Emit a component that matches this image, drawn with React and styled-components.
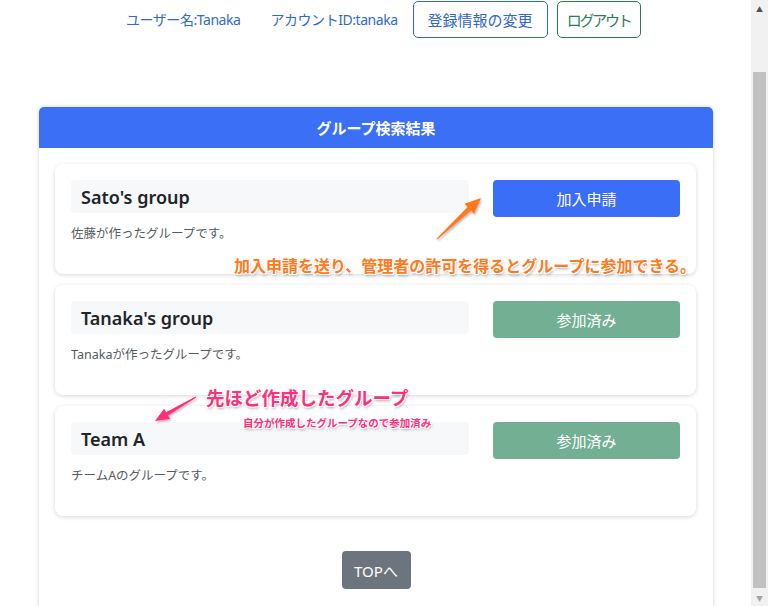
import React from 'react';
import styled, { createGlobalStyle } from 'styled-components';

const GlobalStyle = createGlobalStyle`
  html, body {
    margin: 0;
    padding: 0;
    background: #fff;
    overflow: hidden;
  }
  body {
    font-family: "Noto Sans", "Noto Sans CJK JP", sans-serif;
    color: #212529;
  }
`;

const Shell = styled.div`
  display: flex;
  height: 606px;
  overflow: hidden;
`;

const Main = styled.div`
  position: relative;
  flex: 1;
  min-width: 0;
`;

const TopBar = styled.div`
  display: flex;
  align-items: center;
  height: 36px;
  padding: 1px 0 0 126px;
`;

const UserText = styled.span`
  font-size: 14px;
  color: #3169d3;
  margin-right: ${p => p.gap}px;
  letter-spacing: -0.45px;
`;

const OutlineBtn = styled.button`
  height: 37px;
  padding: 0 ${p => p.pad}px;
  margin-right: ${p => p.gap || 0}px;
  background: #fff;
  border: 1px solid ${p => p.color};
  color: ${p => p.color};
  border-radius: 5px;
  font-family: inherit;
  font-size: 15px;
  letter-spacing: ${p => p.spacing || 0}px;
`;

const ResultCard = styled.div`
  margin: 70px 0 0 39px;
  width: 674px;
  height: 520px;
  border-radius: 5px;
  background: #fff;
  box-shadow: 0 0 4px rgba(0, 0, 0, 0.18);
  overflow: hidden;
`;

const CardHeader = styled.div`
  height: 41px;
  display: flex;
  align-items: center;
  justify-content: center;
  background: #3b6ff6;
  color: #fff;
  font-size: 15px;
  font-weight: 700;
`;

const CardBody = styled.div`
  display: flex;
  flex-direction: column;
  gap: 11px;
  padding: 16px 17px 0 16px;
`;

const GroupItem = styled.div`
  box-sizing: border-box;
  height: 110px;
  display: flex;
  gap: 24px;
  padding: 16px;
  border-radius: 8px;
  background: #fff;
  box-shadow: 0 1px 4px rgba(0, 0, 0, 0.16);
`;

const Info = styled.div`
  flex: 1;
  display: flex;
  flex-direction: column;
`;

const NameBox = styled.div`
  height: 33px;
  display: flex;
  align-items: center;
  padding-left: 10px;
  background: #f7f8fa;
  border-radius: 4px;
  font-size: 18px;
  font-weight: 600;
  color: #212529;
`;

const Desc = styled.div`
  margin-top: 10px;
  font-size: 12.5px;
  color: #555b61;
`;

const ActionBtn = styled.button`
  width: 187px;
  height: 37px;
  border: none;
  border-radius: 4px;
  background: ${p => (p.joined ? '#72af93' : '#3b6ef6')};
  color: #fff;
  font-family: inherit;
  font-size: 15px;
`;

const Footer = styled.div`
  display: flex;
  justify-content: center;
  padding-top: 35px;
`;

const TopBtn = styled.button`
  width: 69px;
  height: 38px;
  border: none;
  border-radius: 4px;
  background: #6c757d;
  color: #fff;
  font-family: inherit;
  font-size: 15px;
`;

const Note = styled.div`
  position: absolute;
  left: ${p => p.x}px;
  top: ${p => p.y}px;
  font-size: ${p => p.size}px;
  font-weight: 700;
  color: ${p => p.color};
  white-space: nowrap;
  text-shadow: -1px -1px 0 #fff, 1px -1px 0 #fff, -1px 1px 0 #fff, 1px 1px 0 #fff,
    1px 2px 3px rgba(0, 0, 0, 0.35);
`;

const Arrows = styled.svg`
  position: absolute;
  left: 0;
  top: 0;
  pointer-events: none;
`;

const Scrollbar = styled.div`
  width: 17px;
  display: flex;
  flex-direction: column;
  background: #f1f1f1;
`;

const ScrollArrow = styled.div`
  height: 17px;
  display: flex;
  align-items: center;
  justify-content: center;
  color: ${p => p.color};
  font-size: 7px;
`;

const Track = styled.div`
  flex: 1;
  display: flex;
  flex-direction: column;
  padding: 55px 2px 1px;
`;

const Thumb = styled.div`
  flex: 1;
  background: #c1c1c1;
`;

const groups = [
  { name: "Sato's group", desc: '佐藤が作ったグループです。', joined: false },
  { name: "Tanaka's group", desc: 'Tanakaが作ったグループです。', joined: true },
  { name: 'Team A', desc: 'チームAのグループです。', joined: true },
];

export default function App() {
  return (
    <Shell>
      <GlobalStyle />
      <Main>
        <TopBar>
          <UserText gap={30}>ユーザー名:Tanaka</UserText>
          <UserText gap={15}>アカウントID:tanaka</UserText>
          <OutlineBtn color="#2f66cf" pad={14} gap={9}>登録情報の変更</OutlineBtn>
          <OutlineBtn color="#2b7a4f" pad={9} spacing={-2.2}>ログアウト</OutlineBtn>
        </TopBar>

        <ResultCard>
          <CardHeader>グループ検索結果</CardHeader>
          <CardBody>
            {groups.map(g => (
              <GroupItem key={g.name}>
                <Info>
                  <NameBox>{g.name}</NameBox>
                  <Desc>{g.desc}</Desc>
                </Info>
                <ActionBtn joined={g.joined}>{g.joined ? '参加済み' : '加入申請'}</ActionBtn>
              </GroupItem>
            ))}
          </CardBody>
          <Footer>
            <TopBtn>TOPへ</TopBtn>
          </Footer>
        </ResultCard>

        <Arrows width="751" height="606">
          <defs>
            <filter id="sh" x="-20%" y="-20%" width="140%" height="140%">
              <feDropShadow dx="1" dy="1.5" stdDeviation="1.2" floodOpacity="0.3" />
            </filter>
          </defs>
          <polygon
            points="437.3,239.4 471,210.7 474.1,214 481,198 464.5,203.8 467.6,207.1 436.7,238.6"
            fill="#ff7a1c"
            filter="url(#sh)"
          />
          <polygon
            points="195.7,396.6 166.1,412.2 164.1,408.7 155,421 170.1,419.1 168.1,415.6 196.3,397.4"
            fill="#ff2f7c"
            filter="url(#sh)"
          />
        </Arrows>

        <Note x={234} y={253} size={16} color="#ff7a1c">
          加入申請を送り、管理者の許可を得るとグループに参加できる。
        </Note>
        <Note x={206} y={384} size={18.5} color="#ff2f7c">
          先ほど作成したグループ
        </Note>
        <Note x={243} y={415} size={10.5} color="#ff2f7c">
          自分が作成したグループなので参加済み
        </Note>
      </Main>

      <Scrollbar>
        <ScrollArrow color="#505050">▲</ScrollArrow>
        <Track>
          <Thumb />
        </Track>
        <ScrollArrow color="#a3a3a3">▼</ScrollArrow>
      </Scrollbar>
    </Shell>
  );
}
